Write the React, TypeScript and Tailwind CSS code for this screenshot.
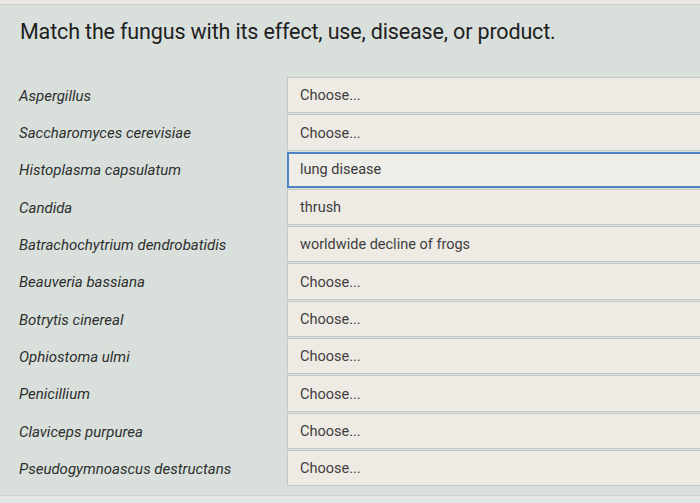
import React from "react";

const rows: { label: string; value: string; focused?: boolean }[] = [
  { label: "Aspergillus", value: "Choose..." },
  { label: "Saccharomyces cerevisiae", value: "Choose..." },
  { label: "Histoplasma capsulatum", value: "lung disease", focused: true },
  { label: "Candida", value: "thrush" },
  { label: "Batrachochytrium dendrobatidis", value: "worldwide decline of frogs" },
  { label: "Beauveria bassiana", value: "Choose..." },
  { label: "Botrytis cinereal", value: "Choose..." },
  { label: "Ophiostoma ulmi", value: "Choose..." },
  { label: "Penicillium", value: "Choose..." },
  { label: "Claviceps purpurea", value: "Choose..." },
  { label: "Pseudogymnoascus destructans", value: "Choose..." },
];

export default function App() {
  return (
    <div
      className="w-[700px] h-[503px] overflow-hidden flex flex-col bg-[#d9e0dc]"
      style={{ fontFamily: "Roboto, 'Noto Sans', sans-serif" }}
    >
      <div className="h-[5px] bg-[#e9e8e5] border-b border-[#c9cdca] shrink-0" />
      <div className="pl-[20px] pt-[14px] h-[72px] shrink-0">
        <h1 className="text-[21.5px] leading-[26px] text-[#1e1e1e] tracking-[-0.15px]">
          Match the fungus with its effect, use, disease, or product.
        </h1>
      </div>
      <div className="flex flex-col gap-[1px]">
        {rows.map((r) => (
          <div key={r.label} className="flex items-center h-[36.3px]">
            <div className="w-[287px] pl-[19px] pt-[2px] italic text-[15px] text-[#2e2e2e]">
              {r.label}
            </div>
            <div
              className={
                r.focused
                  ? "flex-1 h-full flex items-center pl-[11px] pt-[1px] bg-[#efede8] border-2 border-r-0 border-[#4f84c4] text-[14.5px] text-[#3a3a3a]"
                  : "flex-1 h-full flex items-center pl-[12px] pt-[2px] bg-[#eeebe5] border border-r-0 border-[#c6c8c5] text-[14.5px] text-[#3e3e3e]"
              }
            >
              {r.value}
            </div>
          </div>
        ))}
      </div>
      <div className="flex-1 mt-[9px] bg-[#e3e6e4] border-t border-[#cfd3d1]" />
    </div>
  );
}
